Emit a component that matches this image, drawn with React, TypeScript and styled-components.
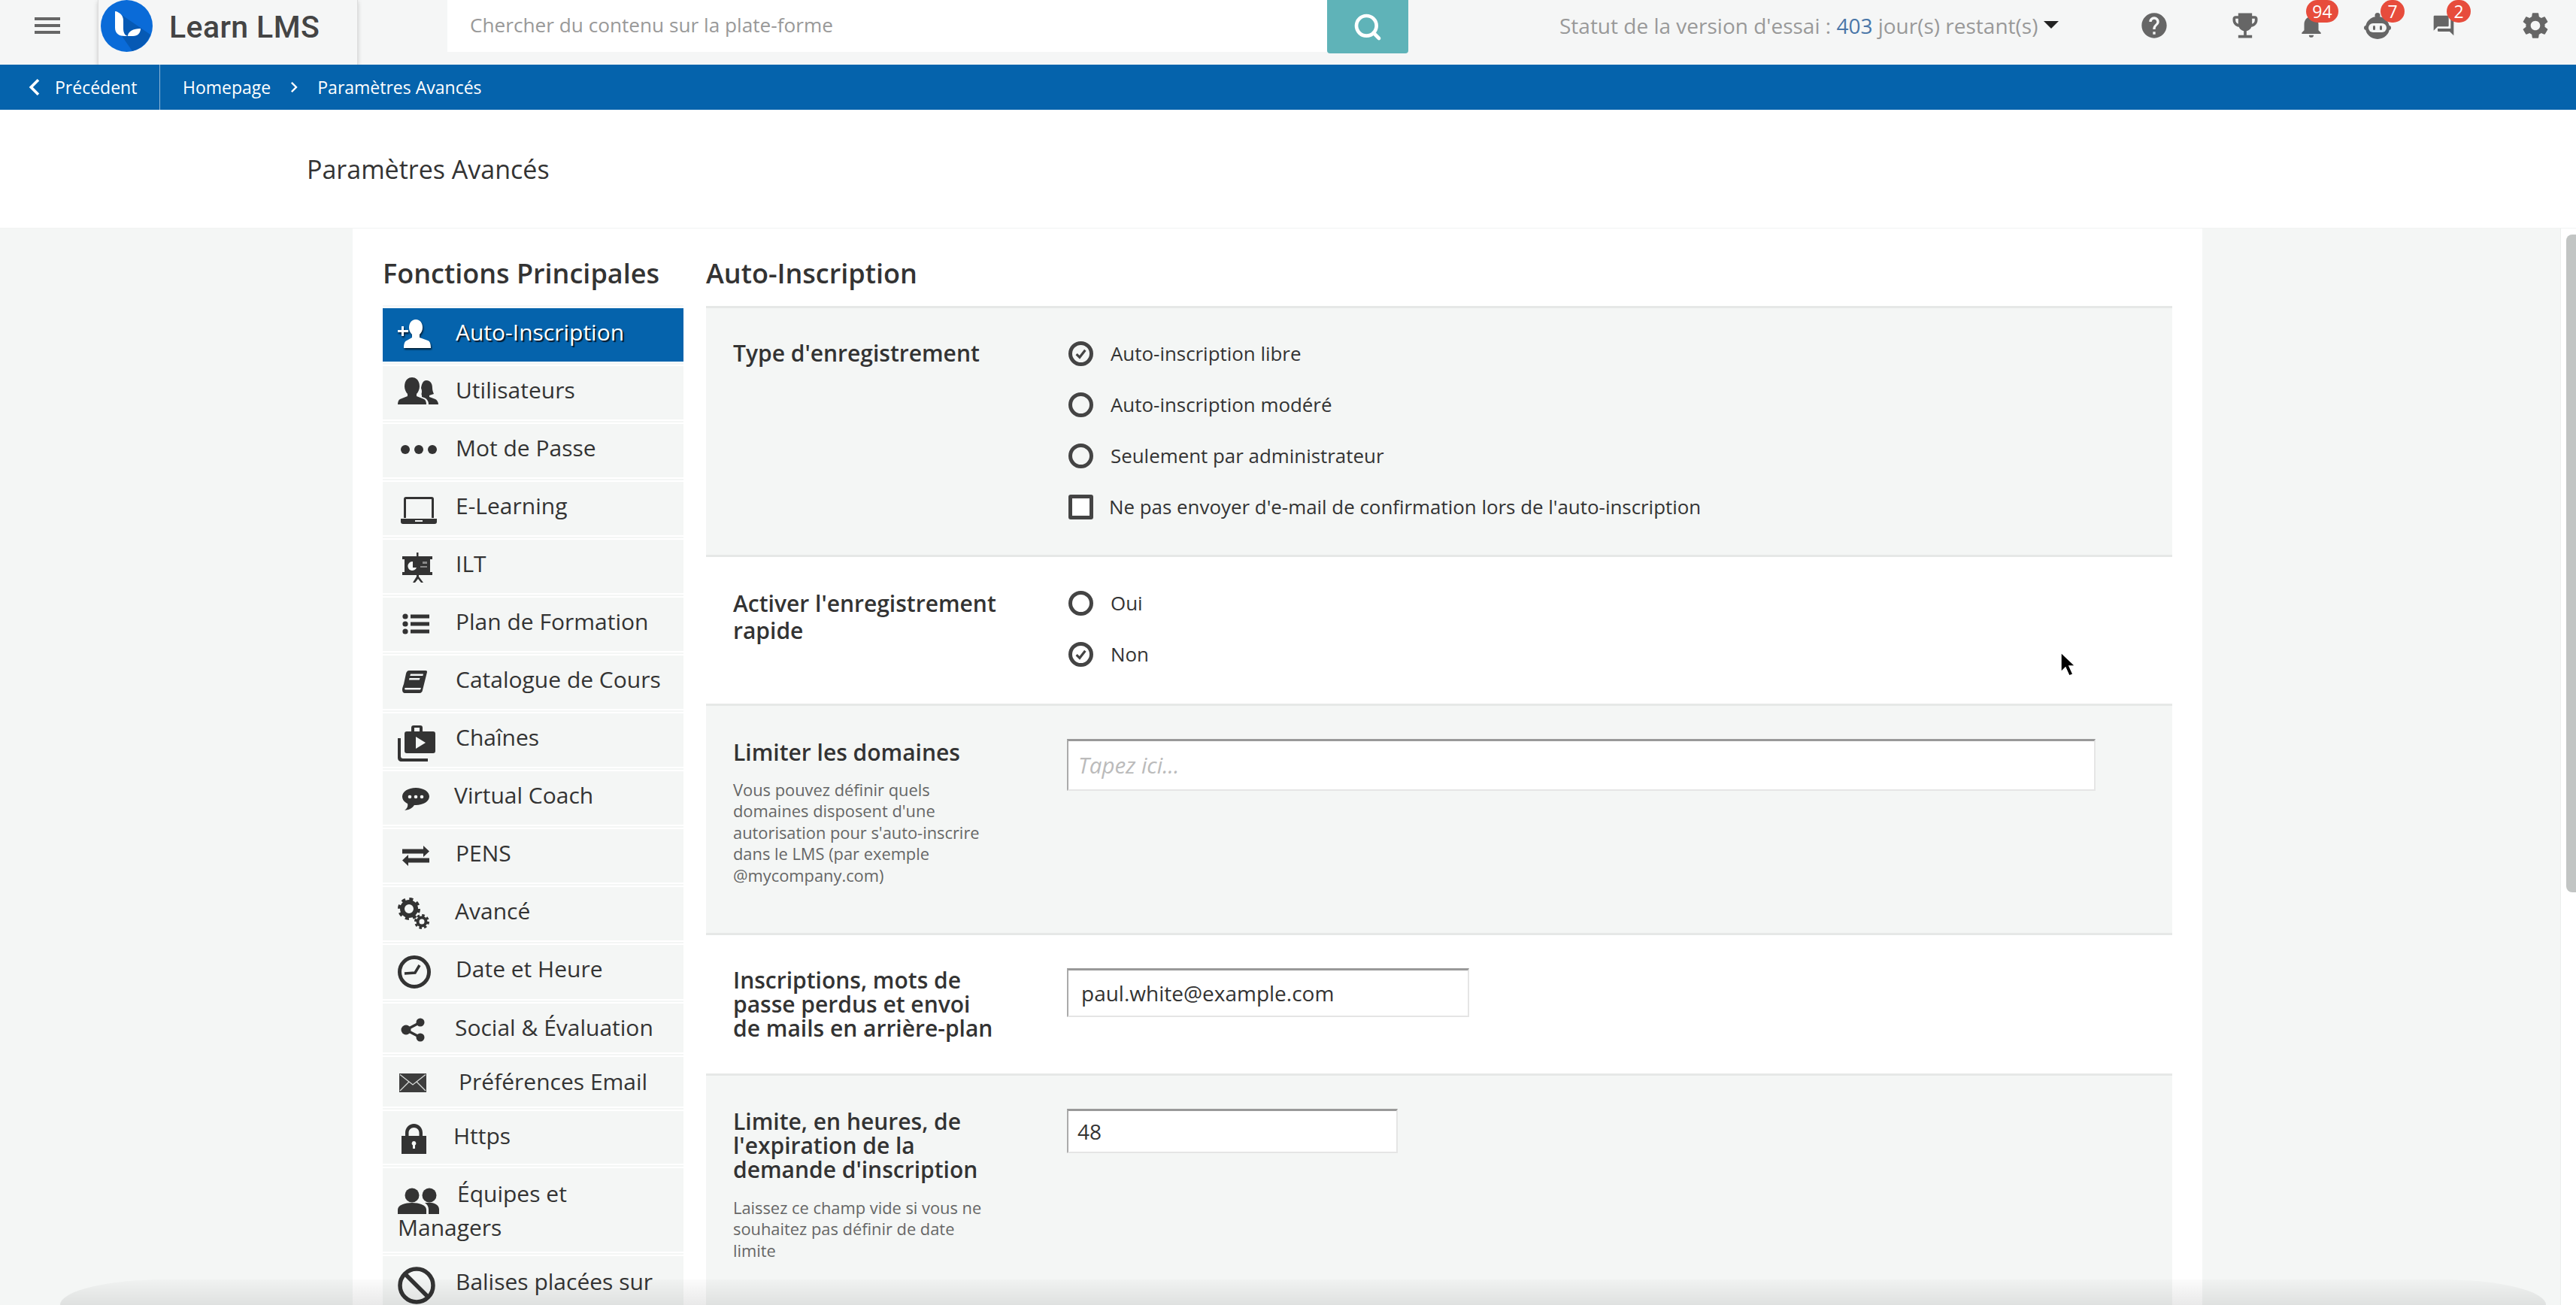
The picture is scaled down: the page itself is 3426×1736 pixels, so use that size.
import React from 'react';
import styled, { createGlobalStyle } from 'styled-components';
import {
  MdHelp,
  MdEmojiEvents,
  MdNotifications,
  MdQuestionAnswer,
  MdSettings,
  MdChevronLeft,
  MdChevronRight,
  MdArrowDropDown,
} from 'react-icons/md';
import { Search } from 'lucide-react';

const GlobalStyle = createGlobalStyle`
  html, body {
    margin: 0;
    padding: 0;
    height: 100%;
    overflow: hidden;
    background: #fff;
    font-family: 'Open Sans', 'Liberation Sans', sans-serif;
    color: #333;
  }
  * { box-sizing: border-box; }
`;

// sidebar glyphs are drawn at their on-screen pixel size, viewBox == size
const PlusUser = () => (
  <svg viewBox="0 0 44 38" fill="currentColor">
    <path d="M24 0c6 0 9 5 9 11 0 4-2 7-4 9v4l11 4c3 1 4 5 4 10H8c0-5 1-9 4-10l7-4v-4c-2-2-4-5-4-9 0-6 3-11 9-11z" />
    <path d="M5 9h3v5h6v3H8v5H5v-5H0v-3h5z" />
  </svg>
);
const Users = () => (
  <svg viewBox="0 0 54 36" fill="currentColor">
    <path d="M19 0c6 0 10 5 10 12 0 4-2 8-4 10v3l10 4c2 1 3 4 3 7H0c0-3 1-6 3-7l10-4v-3c-2-2-4-6-4-10C9 5 13 0 19 0z" />
    <path d="M38 4c5 0 8 4 8 10 0 3 1 6 2 8l-6 2v2l8 3c2 1 4 4 4 7H41c0-3-1-7-6-9l-3-1v-2c-1-2 0-3 0-5 0-3-1-4-1-5 1-6 3-10 7-10z" />
  </svg>
);
const Dots = () => (
  <svg viewBox="0 0 48 14" fill="currentColor">
    <circle cx="6" cy="7" r="6" />
    <circle cx="24" cy="7" r="6" />
    <circle cx="42" cy="7" r="6" />
  </svg>
);
const Laptop = () => (
  <svg viewBox="0 0 48 36" fill="currentColor">
    <path d="M7 0h34c2 0 3 1 3 3v25h-3V3H7v25H4V3c0-2 1-3 3-3z" />
    <path d="M0 29h48v4c0 2-1 3-3 3H3c-2 0-3-1-3-3z" />
    <rect x="19" y="31" width="10" height="2" fill="#f4f6f5" />
  </svg>
);
const Board = () => (
  <svg viewBox="0 0 40 40" fill="currentColor">
    <rect x="19" y="0" width="2.5" height="6" />
    <rect x="0" y="5" width="40" height="4" />
    <rect x="3" y="8" width="34" height="19" />
    <rect x="0" y="26" width="40" height="4" />
    <path d="M19 29h3v3l6 8h-3l-4-5-4 5h-3l5-8z" />
    <path d="M14 12a6 6 0 1 0 5 8h-5z" fill="#f4f6f5" />
    <rect x="24" y="18" width="9" height="2" fill="#888" />
    <rect x="27" y="12" width="6" height="3" fill="#888" />
  </svg>
);
const ListGlyph = () => (
  <svg viewBox="0 0 36 28" fill="currentColor">
    <circle cx="4" cy="4" r="3.6" />
    <circle cx="4" cy="14" r="3.6" />
    <circle cx="4" cy="24" r="3.6" />
    <rect x="11" y="1.5" width="25" height="5" />
    <rect x="11" y="11.5" width="25" height="5" />
    <rect x="11" y="21.5" width="25" height="5" />
  </svg>
);
const Book = () => (
  <svg viewBox="0 0 33 30" fill="currentColor">
    <path d="M9 0h22c2 0 2 1 2 2l-6 24c0 2-2 4-4 4H4c-3 0-4-2-4-5 0-2 1-4 2-7L5 4c1-3 2-4 4-4z" />
    <path d="M11 4.5h17l-.7 2.500H10.300zM9.500 10h14l-.7 2.500H9z" fill="#f4f6f5" />
    <path d="M4 23h21l-1 2.500H4c-1 0-1.400-2.500 0-2.500z" fill="#f4f6f5" />
  </svg>
);
const Channels = () => (
  <svg viewBox="0 0 50 48" fill="currentColor">
    <path d="M21 0h9c2 0 3 1 3 3v5h14c2 0 3 1 3 3v23c0 2-1 3-3 3H12c-2 0-3-1-3-3V11c0-2 1-3 3-3h6V3c0-2 1-3 3-3zm1 3v5h7V3z" fillRule="evenodd" />
    <path d="M0 17h4v24c0 2 1 3 3 3h33v4H5c-3 0-5-2-5-5z" />
    <path d="M24 15l13 8-13 8z" fill="#f4f6f5" />
  </svg>
);
const Bubble = () => (
  <svg viewBox="0 0 36 30" fill="currentColor">
    <path d="M18 0c10 0 18 5 18 11.500S28 23 18 23h-2c-2 3-5 6-13 7 3-2 5-5 4-9-4-2-7-5-7-9.500C0 5 8 0 18 0z" />
    <circle cx="10" cy="12" r="2.300" fill="#f4f6f5" />
    <circle cx="18" cy="12" r="2.300" fill="#f4f6f5" />
    <circle cx="26" cy="12" r="2.300" fill="#f4f6f5" />
  </svg>
);
const Swap = () => (
  <svg viewBox="0 0 36 27" fill="currentColor">
    <path d="M0 4.500h28V0l8 7.500-8 7.500v-4.500H0z" />
    <path d="M36 16.500H8V12l-8 7.500L8 27v-4.500h28z" />
  </svg>
);
const Gears = () => (
  <svg viewBox="0 0 42 42" fill="none" stroke="currentColor">
    <circle cx="15" cy="15" r="9" strokeWidth="6" />
    <circle cx="15" cy="15" r="13" strokeWidth="4" strokeDasharray="5 5.200" />
    <circle cx="32" cy="32" r="5.500" strokeWidth="4" />
    <circle cx="32" cy="32" r="8.500" strokeWidth="3" strokeDasharray="3.500 3.170" />
  </svg>
);
const Clock = () => (
  <svg viewBox="0 0 44 44" fill="none" stroke="currentColor">
    <circle cx="22" cy="22" r="19.500" strokeWidth="5" />
    <path d="M9 24l14-1 6-10" strokeWidth="3.500" />
  </svg>
);
const Share = () => (
  <svg viewBox="0 0 32 32" fill="currentColor" stroke="currentColor">
    <path d="M7 16L26 6M7 16l19 10" strokeWidth="3.500" />
    <circle cx="7" cy="16" r="6.500" stroke="none" />
    <circle cx="26" cy="6" r="5.500" stroke="none" />
    <circle cx="26" cy="26" r="5.500" stroke="none" />
  </svg>
);
const Mail = () => (
  <svg viewBox="0 0 36 25" fill="currentColor">
    <rect width="36" height="25" fill="#3d3d3d" />
    <path d="M1 1.500L18 15 35 1.500M1 23l12-12M35 23L23 11" fill="none" stroke="#d8dbda" strokeWidth="1.300" />
  </svg>
);
const Lock = () => (
  <svg viewBox="0 0 33 40" fill="currentColor">
    <path d="M5 17V12C5 5 10 0 16.500 0S28 5 28 12v5h-4.500v-5c0-4-3-7-7-7s-7 3-7 7v5z" />
    <rect y="16" width="33" height="24" />
    <path d="M16.500 23a3 3 0 0 1 1.500 5.500V33h-3v-4.500a3 3 0 0 1 1.500-5.500z" fill="#f4f6f5" />
  </svg>
);
const Team = () => (
  <svg viewBox="0 0 55 35" fill="currentColor">
    <circle cx="19" cy="10" r="9.500" />
    <circle cx="42" cy="10" r="9.500" />
    <path d="M0 35v-6c0-6 10-9 19-9s19 3 19 9v6z" />
    <path d="M41 35v-6c0-4-2-7-5-9 2 0 4-.3 6-.3 6 0 13 3 13 9v6.300z" />
  </svg>
);
const Ban = () => (
  <svg viewBox="0 0 50 50" fill="none" stroke="currentColor" strokeWidth="5.500">
    <circle cx="25" cy="25" r="22" />
    <path d="M9.500 9.500l31 31" />
  </svg>
);

const LogoMark = () => (
  <svg viewBox="0 0 69 69" width="69" height="69">
    <circle cx="34.500" cy="34.500" r="34.500" fill="#0a6bd8" />
    <path d="M28 20l38 26A34.500 34.500 0 0 1 42 68L24 42z" fill="#0653a8" opacity="0.75" />
    <path d="M20 15c6 2 10 6 10 12v11c0 5 2 10 7 10h-5c-7 0-13-3-13-11V16c0-1 0-1 1-1z" fill="#fff" />
    <path d="M36 48c0-6 7-10 17-10 0 6-4 10-10 10z" fill="#fff" />
  </svg>
);

const RobotHead = () => (
  <svg viewBox="0 0 36 35" width="36" height="35">
    <circle cx="18" cy="3.500" r="3.500" fill="#666" />
    <ellipse cx="18" cy="20" rx="16" ry="15" fill="#666" />
    <rect x="0" y="17" width="36" height="6" rx="3" fill="#666" />
    <rect x="6" y="14" width="24" height="12" rx="6" fill="#f4f6f5" />
    <rect x="12" y="17" width="3" height="6" rx="1.500" fill="#666" />
    <rect x="21" y="17" width="3" height="6" rx="1.500" fill="#666" />
  </svg>
);

const Page = styled.div`
  height: 1736px;
  display: flex;
  flex-direction: column;
  position: relative;
  overflow: hidden;
`;

const TopBar = styled.header`
  height: 86px;
  flex: none;
  display: flex;
  align-items: flex-start;
  background: #f5f6f6;
  overflow: hidden;
`;

const MenuButton = styled.div`
  width: 130px;
  height: 86px;
  flex: none;
  padding: 23px 0 0 46px;

  span {
    display: block;
    width: 34px;
    height: 4px;
    margin-bottom: 5px;
    background: #666;
  }
`;

const LogoBox = styled.div`
  width: 346px;
  height: 86px;
  flex: none;
  display: flex;
  align-items: flex-start;
  gap: 22px;
  padding-left: 3px;
  border-left: 1px solid #ddd;
  border-right: 1px solid #ddd;
  box-shadow: 0 2px 6px rgba(0, 0, 0, 0.18);
`;

const LogoText = styled.span`
  font-family: 'Roboto', 'Open Sans', sans-serif;
  font-weight: 500;
  font-size: 41px;
  line-height: 72px;
  color: #444;
  letter-spacing: 0.4px;
`;

const SearchField = styled.div`
  width: 1170px;
  height: 69px;
  margin-left: 119px;
  flex: none;
  padding-left: 30px;
  background: #fff;
  font-size: 26.200px;
  line-height: 67px;
  color: #999;
`;

const SearchButton = styled.div`
  width: 108px;
  height: 71px;
  flex: none;
  display: flex;
  align-items: center;
  justify-content: center;
  background: #5fb3b8;
  color: #fff;
  border-radius: 0 0 4px 4px;
`;

const TrialStatus = styled.div`
  margin-left: 201px;
  width: 668px;
  flex: none;
  display: flex;
  align-items: center;
  font-size: 28px;
  line-height: 68px;
  color: #999;
  white-space: pre;

  b {
    font-weight: 400;
    color: #4a76a8;
  }
  svg {
    flex: none;
    color: #222;
    margin: -4px -10px 0 -6px;
  }
`;

const HeadIcon = styled.div<{ $ml: number; $w: number }>`
  position: relative;
  flex: none;
  margin: 17px 0 0 ${p => p.$ml}px;
  width: ${p => p.$w}px;
  height: 34px;
  display: flex;
  align-items: center;
  justify-content: center;
  color: #666;

  > svg {
    flex: none;
  }
`;

const Badge = styled.span<{ $left: number; $w: number }>`
  position: absolute;
  top: -17px;
  left: ${p => p.$left}px;
  width: ${p => p.$w}px;
  height: 30px;
  border-radius: 15px;
  background: #e74c3c;
  color: #fff;
  font-size: 23px;
  line-height: 30px;
  text-align: center;
`;

const CrumbBar = styled.nav`
  height: 60px;
  flex: none;
  display: flex;
  align-items: center;
  background: #0563ac;
  color: #fff;
  font-size: 23px;
  font-weight: 500;
`;

const BackLink = styled.div`
  width: 213px;
  height: 60px;
  flex: none;
  display: flex;
  align-items: center;
  padding-left: 30px;
  gap: 5px;
  border-right: 1px solid #8fb6d6;

  svg {
    flex: none;
    margin-left: -6px;
  }
`;

const CrumbTrail = styled.div`
  display: flex;
  align-items: center;
  margin-left: 30px;
  gap: 20px;

  svg {
    flex: none;
    margin: 0 -3px;
  }
`;

const TitleBand = styled.div`
  height: 158px;
  flex: none;
  padding: 57px 0 0 408px;
  background: #fff;
  border-bottom: 1px solid #f1f3f2;
`;

const PageTitle = styled.h1`
  margin: 0;
  font-size: 34px;
  line-height: 45px;
  font-weight: 500;
  color: #333;
`;

const Body = styled.div`
  flex: 1;
  min-height: 0;
  display: flex;
`;

const Workspace = styled.main`
  flex: 1;
  min-width: 0;
  background: #f4f6f5;
  overflow: hidden;
`;

const Card = styled.div`
  width: 2460px;
  min-height: 100%;
  margin-left: 469px;
  padding: 40px 40px 0;
  display: flex;
  gap: 30px;
  background: #fff;
`;

const SideColumn = styled.aside`
  width: 400px;
  flex: none;
`;

const MainColumn = styled.section`
  width: 1950px;
  flex: none;
`;

const ColumnTitle = styled.h2<{ $mb: number }>`
  margin: 0 0 ${p => p.$mb}px;
  font-size: 36px;
  line-height: 40px;
  font-weight: 600;
  color: #333;
`;

const NavList = styled.ul`
  list-style: none;
  margin: 0;
  padding: 0;
`;

const NavRow = styled.li`
  padding: 2px 0;
  border-top: 2px solid #f4f6f5;
`;

const NavItem = styled.div<{ $active?: boolean; $h: number; $pt: number }>`
  height: ${p => p.$h}px;
  padding: ${p => p.$pt}px 20px 0;
  font-size: 30px;
  line-height: 45px;
  background: ${p => (p.$active ? '#0563ac' : '#f4f6f5')};
  color: ${p => (p.$active ? '#fff' : '#333')};
  text-shadow: ${p => (p.$active ? '2px 2px 1px rgba(0,0,0,0.75)' : 'none')};
`;

// zero-height inline box sitting on the baseline, the glyph hangs from it
const GlyphSlot = styled.span<{ $w: number }>`
  display: inline-block;
  width: ${p => p.$w}px;
  height: 0;
`;

const Glyph = styled.span<{ $x: number; $y: number; $w: number; $h: number; $active?: boolean }>`
  display: block;
  width: ${p => p.$w}px;
  height: ${p => p.$h}px;
  margin: ${p => p.$y}px 0 0 ${p => p.$x}px;
  filter: ${p => (p.$active ? 'drop-shadow(1px 2px 1px rgba(0,0,0,0.7))' : 'none')};

  svg {
    display: block;
    width: 100%;
    height: 100%;
  }
`;

const Row = styled.div<{ $alt?: boolean; $h: number }>`
  height: ${p => p.$h}px;
  display: grid;
  grid-template-columns: 444px 1fr;
  align-items: start;
  padding: 28px 0 0 36px;
  border-top: 3px solid #e6e8e7;
  background: ${p => (p.$alt ? '#f4f6f5' : '#fff')};
`;

const LabelColumn = styled.div`
  width: 356px;
`;

const RowLabel = styled.div<{ $lh?: number; $mt: number }>`
  margin-top: ${p => p.$mt}px;
  font-size: 30px;
  font-weight: 600;
  line-height: ${p => p.$lh ?? 32}px;
  color: #333;
`;

const RowHint = styled.p<{ $mt: number }>`
  margin: ${p => p.$mt}px 0 0;
  width: 345px;
  font-size: 21.850px;
  line-height: 28.400px;
  color: #666;
`;

const OptionList = styled.div<{ $mt: number }>`
  margin-top: ${p => p.$mt}px;
  padding-left: 2px;
`;

const Option = styled.div`
  height: 68px;
  display: flex;
  align-items: center;
  gap: 23px;
  font-size: 25.900px;
  color: #333;
`;

const RadioMark = styled.span`
  width: 33px;
  height: 33px;
  flex: none;
  border: 5px solid #444;
  border-radius: 50%;
  display: flex;
  align-items: center;
  justify-content: center;
`;

const CheckMark = styled.span`
  width: 33px;
  height: 33px;
  flex: none;
  margin-right: -2px;
  border: 5px solid #444;
  border-radius: 3px;
  background: #fff;
`;

const TextField = styled.div<{ $w: number; $h: number; $fs: number; $pad: number; $hint?: boolean }>`
  margin-top: 16px;
  width: ${p => p.$w}px;
  height: ${p => p.$h}px;
  padding-left: ${p => p.$pad}px;
  background: #fff;
  border-top: 3px solid #999;
  border-left: 2px solid #aaa;
  border-right: 2px solid #e5e5e5;
  border-bottom: 2px solid #e5e5e5;
  font-size: ${p => p.$fs}px;
  line-height: ${p => p.$h - 5}px;
  color: ${p => (p.$hint ? '#bbb' : '#333')};
  font-style: ${p => (p.$hint ? 'italic' : 'normal')};
`;

const ScrollTrack = styled.div`
  width: 21px;
  flex: none;
  padding: 8px 0 0 7px;
  background: #fff;
  border-left: 1px solid #eceeed;
`;

const ScrollThumb = styled.div`
  width: 14px;
  height: 875px;
  border-radius: 8px 0 0 8px;
  background: #c2c5c4;
`;

const BottomShade = styled.div`
  position: absolute;
  left: 80px;
  right: 40px;
  bottom: 0;
  height: 34px;
  border-radius: 140px 140px 0 0 / 34px 34px 0 0;
  background: linear-gradient(rgba(0, 0, 0, 0.015), rgba(0, 0, 0, 0.085));
  pointer-events: none;
`;

const Pointer = styled.svg`
  position: absolute;
  left: 2738px;
  top: 866px;
  width: 22px;
  height: 36px;
`;

const navItems = [
  { label: 'Auto-Inscription', Icon: PlusUser, w: 44, h: 38, x: 0, y: -28, slot: 77, height: 71, pt: 9, active: true },
  { label: 'Utilisateurs', Icon: Users, w: 54, h: 36, x: 0, y: -28, slot: 77, height: 71, pt: 9 },
  { label: 'Mot de Passe', Icon: Dots, w: 48, h: 14, x: 4, y: -16, slot: 77, height: 71, pt: 9 },
  { label: 'E-Learning', Icon: Laptop, w: 48, h: 36, x: 4, y: -23, slot: 77, height: 71, pt: 9 },
  { label: 'ILT', Icon: Board, w: 40, h: 40, x: 6, y: -26, slot: 77, height: 71, pt: 9 },
  { label: 'Plan de Formation', Icon: ListGlyph, w: 36, h: 28, x: 6, y: -22, slot: 77, height: 71, pt: 9 },
  { label: 'Catalogue de Cours', Icon: Book, w: 33, h: 30, x: 6, y: -23, slot: 77, height: 71, pt: 9 },
  { label: 'Chaînes', Icon: Channels, w: 50, h: 48, x: 0, y: -27, slot: 77, height: 71, pt: 9 },
  { label: 'Virtual Coach', Icon: Bubble, w: 36, h: 30, x: 6, y: -21, slot: 75, height: 71, pt: 9 },
  { label: 'PENS', Icon: Swap, w: 36, h: 27, x: 6, y: -21, slot: 77, height: 71, pt: 9 },
  { label: 'Avancé', Icon: Gears, w: 42, h: 42, x: 0, y: -29, slot: 76, height: 71, pt: 9 },
  { label: 'Date et Heure', Icon: Clock, w: 44, h: 44, x: 0, y: -29, slot: 77, height: 72, pt: 9 },
  { label: 'Social & Évaluation', Icon: Share, w: 32, h: 32, x: 4, y: -24, slot: 76, height: 65, pt: 9 },
  { label: 'Préférences Email', Icon: Mail, w: 36, h: 25, x: 2, y: -22, slot: 81, height: 66, pt: 10 },
  { label: 'Https', Icon: Lock, w: 33, h: 40, x: 5, y: -27, slot: 74, height: 70, pt: 10 },
  { label: 'Équipes et Managers', Icon: Team, w: 55, h: 35, x: 0, y: -19, slot: 79, height: 111, pt: 11 },
  { label: 'Balises placées sur', Icon: Ban, w: 50, h: 50, x: 0, y: -31, slot: 77, height: 120, pt: 11 },
];

const registerOptions = [
  { label: 'Auto-inscription libre', checked: true },
  { label: 'Auto-inscription modéré', checked: false },
  { label: 'Seulement par administrateur', checked: false },
];

const Radio = ({ checked }: { checked?: boolean }) => (
  <RadioMark>
    {checked && (
      <svg viewBox="0 0 16 16" width="17" height="17" fill="none" stroke="#444" strokeWidth="3">
        <path d="M2.500 8.500l4 4 7-9" />
      </svg>
    )}
  </RadioMark>
);

export default function App() {
  return (
    <Page>
      <GlobalStyle />
      <TopBar>
        <MenuButton>
          <span />
          <span />
          <span />
        </MenuButton>
        <LogoBox>
          <LogoMark />
          <LogoText>Learn LMS</LogoText>
        </LogoBox>
        <SearchField>Chercher du contenu sur la plate-forme</SearchField>
        <SearchButton>
          <Search size={40} strokeWidth={2.800} />
        </SearchButton>
        <TrialStatus>
          Statut de la version d'essai : <b>403</b> jour(s) restant(s)
          <MdArrowDropDown size={48} />
        </TrialStatus>
        <HeadIcon $ml={106} $w={33}>
          <MdHelp size={40} />
        </HeadIcon>
        <HeadIcon $ml={88} $w={34}>
          <MdEmojiEvents size={44} />
        </HeadIcon>
        <HeadIcon $ml={58} $w={26}>
          <MdNotifications size={38} />
          <Badge $left={6} $w={43}>94</Badge>
        </HeadIcon>
        <HeadIcon $ml={57} $w={36}>
          <RobotHead />
          <Badge $left={22} $w={32}>7</Badge>
        </HeadIcon>
        <HeadIcon $ml={56} $w={27}>
          <MdQuestionAnswer size={32} />
          <Badge $left={18} $w={32}>2</Badge>
        </HeadIcon>
        <HeadIcon $ml={92} $w={33}>
          <MdSettings size={42} />
        </HeadIcon>
      </TopBar>

      <CrumbBar>
        <BackLink>
          <MdChevronLeft size={44} />
          Précédent
        </BackLink>
        <CrumbTrail>
          <span>Homepage</span>
          <MdChevronRight size={28} />
          <span>Paramètres Avancés</span>
        </CrumbTrail>
      </CrumbBar>

      <TitleBand>
        <PageTitle>Paramètres Avancés</PageTitle>
      </TitleBand>

      <Body>
        <Workspace>
          <Card>
            <SideColumn>
              <ColumnTitle $mb={22}>Fonctions Principales</ColumnTitle>
              <NavList>
                {navItems.map(({ label, Icon, w, h, x, y, slot, height, pt, active }) => (
                  <NavRow key={label}>
                    <NavItem $active={active} $h={height} $pt={pt}>
                      <GlyphSlot $w={slot}>
                        <Glyph $x={x} $y={y} $w={w} $h={h} $active={active}>
                          <Icon />
                        </Glyph>
                      </GlyphSlot>
                      {label}
                    </NavItem>
                  </NavRow>
                ))}
              </NavList>
            </SideColumn>

            <MainColumn>
              <ColumnTitle $mb={23}>Auto-Inscription</ColumnTitle>

              <Row $alt $h={331}>
                <LabelColumn>
                  <RowLabel $mt={16}>Type d'enregistrement</RowLabel>
                </LabelColumn>
                <OptionList $mt={-2}>
                  {registerOptions.map(o => (
                    <Option key={o.label}>
                      <Radio checked={o.checked} />
                      {o.label}
                    </Option>
                  ))}
                  <Option>
                    <CheckMark />
                    Ne pas envoyer d'e-mail de confirmation lors de l'auto-inscription
                  </Option>
                </OptionList>
              </Row>

              <Row $h={198}>
                <LabelColumn>
                  <RowLabel $mt={16} $lh={36}>Activer l'enregistrement rapide</RowLabel>
                </LabelColumn>
                <OptionList $mt={-1}>
                  <Option>
                    <Radio />
                    Oui
                  </Option>
                  <Option>
                    <Radio checked />
                    Non
                  </Option>
                </OptionList>
              </Row>

              <Row $alt $h={305}>
                <LabelColumn>
                  <RowLabel $mt={18}>Limiter les domaines</RowLabel>
                  <RowHint $mt={20}>
                    Vous pouvez définir quels domaines disposent d'une autorisation pour
                    s'auto-inscrire dans le LMS (par exemple @mycompany.com)
                  </RowHint>
                </LabelColumn>
                <TextField $w={1368} $h={69} $fs={29.500} $pad={13} $hint>
                  Tapez ici...
                </TextField>
              </Row>

              <Row $h={187}>
                <LabelColumn>
                  <RowLabel $mt={16}>Inscriptions, mots de passe perdus et envoi de mails en arrière-plan</RowLabel>
                </LabelColumn>
                <TextField $w={535} $h={65} $fs={28} $pad={17}>
                  paul.white@example.com
                </TextField>
              </Row>

              <Row $alt $h={420}>
                <LabelColumn>
                  <RowLabel $mt={17}>Limite, en heures, de l'expiration de la demande d'inscription</RowLabel>
                  <RowHint $mt={21}>Laissez ce champ vide si vous ne souhaitez pas définir de date limite</RowHint>
                </LabelColumn>
                <TextField $w={440} $h={59} $fs={28} $pad={12}>
                  48
                </TextField>
              </Row>
            </MainColumn>
          </Card>
        </Workspace>
        <ScrollTrack>
          <ScrollThumb />
        </ScrollTrack>
      </Body>

      <BottomShade />
      <Pointer viewBox="0 0 22 36">
        <path d="M3 2v26l6-6 5 11 5-2-5-11h8z" fill="#000" stroke="#fff" strokeWidth="1.500" />
      </Pointer>
    </Page>
  );
}
